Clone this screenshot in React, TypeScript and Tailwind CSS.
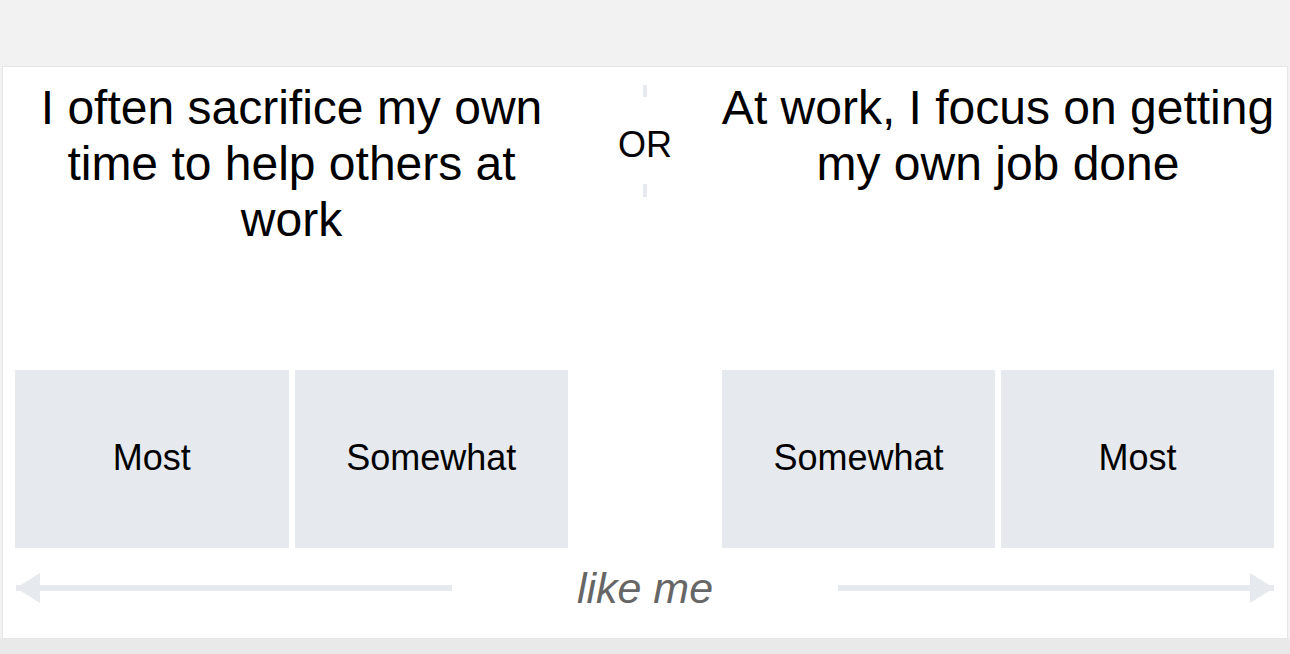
import React from "react";

const font = { fontFamily: '"Liberation Sans", Arial, sans-serif' };

function Box({ label }: { label: string }) {
  return (
    <div className="h-[178px] bg-[#e6e9ee] flex items-center justify-center text-[36px] text-black leading-none pb-[2px]">
      {label}
    </div>
  );
}

export default function App() {
  return (
    <div className="w-[1290px] h-[654px] bg-[#f2f2f2] flex flex-col overflow-hidden" style={font}>
      <div className="h-[66px] shrink-0" />
      <div className="mx-[2px] w-[1286px] bg-white border border-[#e6e6e6] pl-[12px] pr-[11px] pt-[13px] pb-[35px] shrink-0">
        <div className="flex h-[290px]">
          <div className="w-[553px] flex justify-center">
            <p className="w-[557px] shrink-0 text-center text-[48px] leading-[56px] text-black">
              I often sacrifice my own time to help others at work
            </p>
          </div>
          <div className="w-[154px] flex flex-col items-center">
            <div className="mt-[5px] w-[4px] h-[12px] bg-[#e6e9ee]" />
            <div className="mt-[27px] text-[36px] leading-[41px] text-black">OR</div>
            <div className="mt-[19px] w-[4px] h-[13px] bg-[#e6e9ee]" />
          </div>
          <div className="w-[552px] flex justify-center">
            <p className="w-[557px] shrink-0 text-center text-[48px] leading-[56px] text-black">
              At work, I focus on getting my own job done
            </p>
          </div>
        </div>
        <div className="flex">
          <div className="w-[553px] grid grid-cols-2 gap-[6px]">
            <Box label="Most" />
            <Box label="Somewhat" />
          </div>
          <div className="w-[154px]" />
          <div className="w-[552px] grid grid-cols-2 gap-[6px]">
            <Box label="Somewhat" />
            <Box label="Most" />
          </div>
        </div>
        <div className="mt-[25px] flex items-center h-[30px]">
          <svg width="437" height="30" viewBox="0 0 437 30" className="shrink-0">
            <rect x="1" y="12" width="436" height="6" fill="#e6e9ee" />
            <polygon points="1,15 25,0 25,30" fill="#e6e9ee" />
          </svg>
          <div className="w-[386px] shrink-0 text-center italic text-[43px] leading-none text-[#666666]">
            like me
          </div>
          <svg width="436" height="30" viewBox="0 0 436 30" className="shrink-0">
            <rect x="0" y="12" width="436" height="6" fill="#e6e9ee" />
            <polygon points="436,15 412,0 412,30" fill="#e6e9ee" />
          </svg>
        </div>
      </div>
      <div className="flex-1 bg-[#e9e9e9]" />
    </div>
  );
}
